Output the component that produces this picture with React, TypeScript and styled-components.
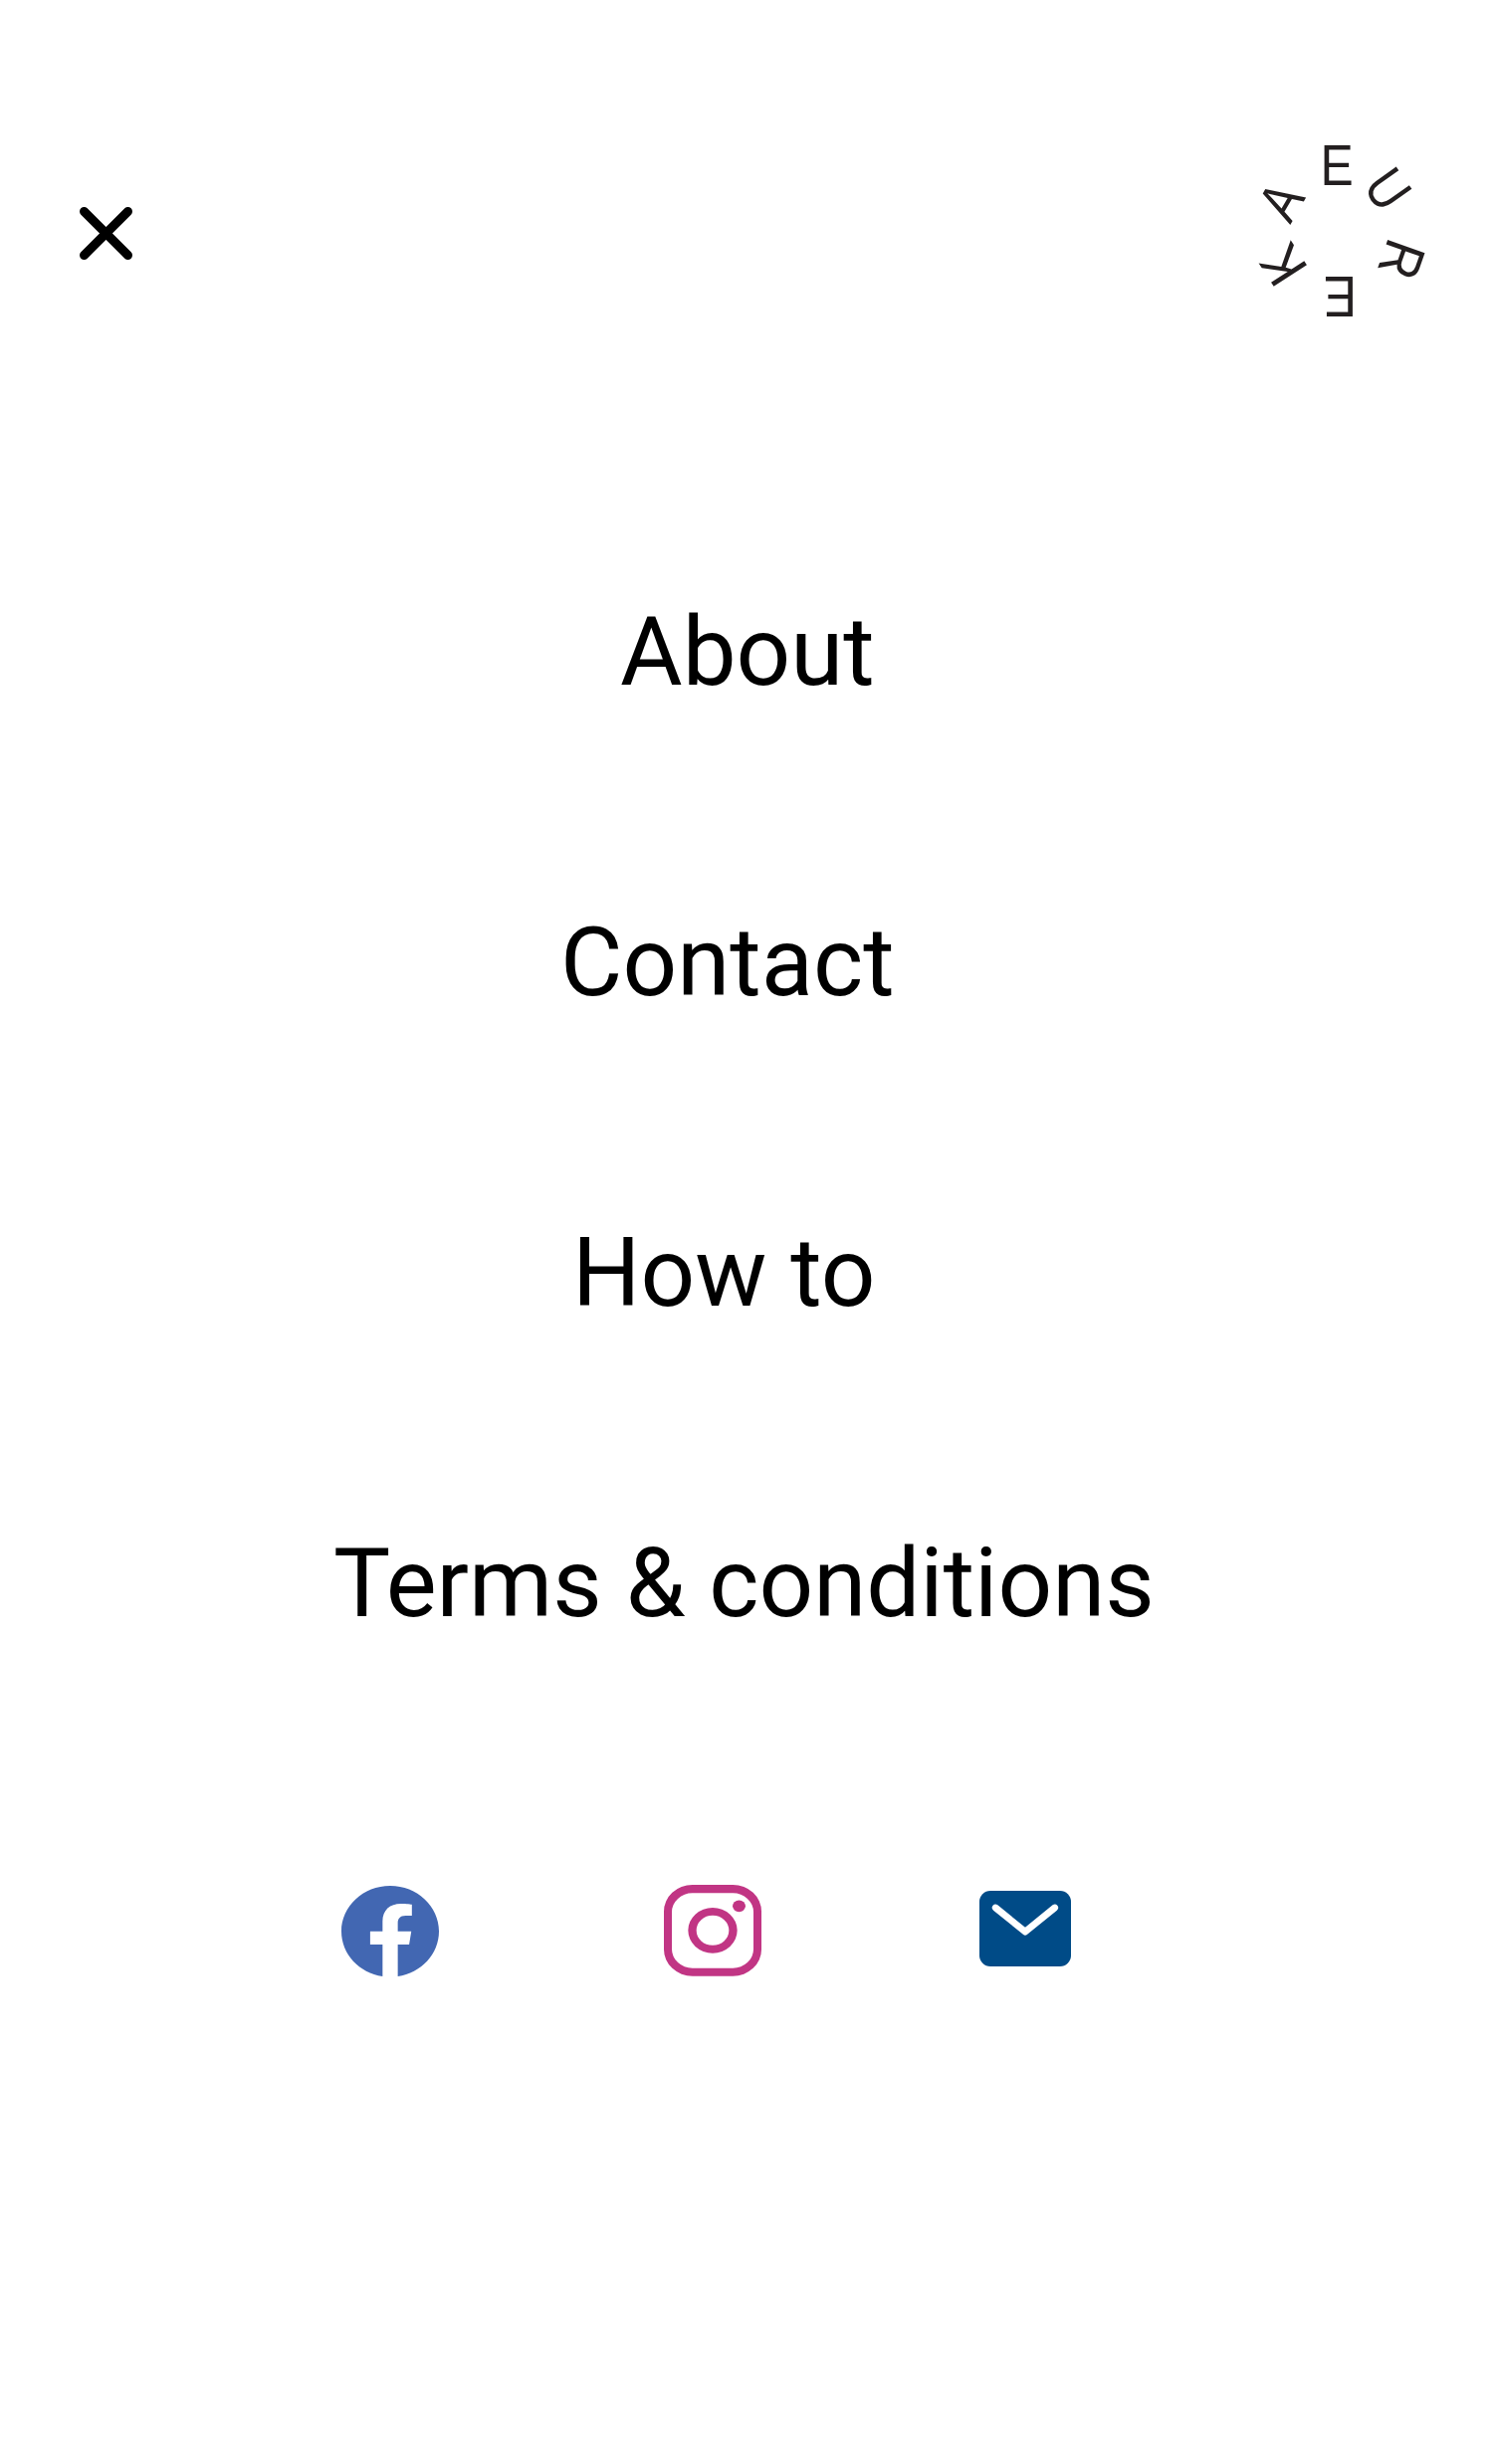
import React from 'react';
import styled, { createGlobalStyle } from 'styled-components';

const GlobalStyle = createGlobalStyle`
  body { margin: 0; background: #fff; }
`;

const Page = styled.div`
  box-sizing: border-box;
  display: flex;
  flex-direction: column;
  width: 1504px;
  height: 2476px;
  background: #fff;
  color: #000;
  font-family: Roboto, sans-serif;
  overflow: hidden;
`;

const Header = styled.header`
  box-sizing: border-box;
  display: flex;
  justify-content: space-between;
  align-items: flex-start;
  height: 499px;
  padding: 124px 50px 0 60px;
`;

const CloseButton = styled.button`
  display: block;
  width: 90px;
  height: 90px;
  margin: 66px 0 0;
  padding: 0;
  border: 0;
  background: none;
  cursor: pointer;
`;

const Icon = styled.svg<{ $w: number; $h: number }>`
  display: block;
  width: ${({ $w }) => $w}px;
  height: ${({ $h }) => $h}px;
`;

const LogoLetter = styled.text`
  font-family: 'Liberation Sans', Arial, sans-serif;
  font-size: 57.6px;
  fill: #231f20;
  text-anchor: middle;
`;

const Menu = styled.nav`
  display: flex;
  flex-direction: column;
  align-items: flex-start;
`;

const MenuLink = styled.a<{ $indent: number }>`
  margin-left: ${({ $indent }) => $indent}px;
  font-size: 96px;
  line-height: 312px;
  white-space: nowrap;
  color: inherit;
  text-decoration: none;
`;

const Social = styled.footer`
  display: flex;
  align-items: center;
  height: 92px;
  margin: 147px 0 0 343px;
`;

const SocialLink = styled.a<{ $gap?: number; $lift?: number }>`
  display: block;
  margin-left: ${({ $gap = 0 }) => $gap}px;
  margin-bottom: ${({ $lift = 0 }) => $lift}px;
`;

const letters = [
  { char: 'E', x: 99, y: 62.3, angle: 0, stretch: 0.865 },
  { char: 'U', x: 134.2, y: 77.6, angle: 54.7, stretch: 0.83 },
  { char: 'R', x: 145.4, y: 130.2, angle: 109.5, stretch: 0.87 },
  { char: 'E', x: 102.3, y: 154.3, angle: 180, stretch: 0.865 },
  { char: 'K', x: 61.8, y: 131.2, angle: 237, stretch: 0.9 },
  { char: 'A', x: 60.2, y: 88.3, angle: 300, stretch: 0.83 },
];

const links = [
  { label: 'About', indent: 623 },
  { label: 'Contact', indent: 563 },
  { label: 'How to', indent: 575 },
  { label: 'Terms & conditions', indent: 335 },
];

export default function App() {
  return (
    <>
      <GlobalStyle />
      <Page>
        <Header>
          <CloseButton aria-label="Close">
            <Icon $w={90} $h={90} viewBox="0 0 90 90">
              <path d="M24.5 22.5l44 44M68.5 22.5l-44 44" stroke="#000" strokeWidth="9" strokeLinecap="round" />
            </Icon>
          </CloseButton>
          <Icon $w={210} $h={210} viewBox="0 0 210 210">
            {letters.map((l, i) => (
              <LogoLetter key={i} transform={`translate(${l.x} ${l.y}) rotate(${l.angle}) scale(${l.stretch} 1)`}>
                {l.char}
              </LogoLetter>
            ))}
          </Icon>
        </Header>
        <Menu>
          {links.map((l) => (
            <MenuLink key={l.label} $indent={l.indent}>{l.label}</MenuLink>
          ))}
        </Menu>
        <Social>
          <SocialLink aria-label="Facebook">
            <Icon $w={98} $h={91} viewBox="0 0.073 24 23.854" preserveAspectRatio="none">
              <path fill="#4267b2" d="M24 12.073c0-6.627-5.373-12-12-12s-12 5.373-12 12c0 5.99 4.388 10.954 10.125 11.854v-8.385H7.078v-3.47h3.047V9.43c0-3.007 1.792-4.669 4.533-4.669 1.312 0 2.686.235 2.686.235v2.953H15.83c-1.491 0-1.956.925-1.956 1.874v2.25h3.328l-.532 3.47h-2.796v8.385C19.612 23.027 24 18.062 24 12.073z" />
            </Icon>
          </SocialLink>
          <SocialLink aria-label="Instagram" $gap={226}>
            <Icon $w={98} $h={92} viewBox="51 72 294 276">
              <path
                fill="#c13584"
                fillRule="evenodd"
                d="M137 72H259A86 80 0 0 1 345 152V267A86 80 0 0 1 259 347H137A86 80 0 0 1 51 267V152A86 80 0 0 1 137 72ZM137 97A62 57 0 0 0 75 154V266A62 57 0 0 0 137 323H259A62 57 0 0 0 321 266V154A62 57 0 0 0 259 97Z"
              />
              <path
                fill="#c13584"
                fillRule="evenodd"
                d="M124 209.500A74 68.500 0 0 1 272 209.500A74 68.500 0 0 1 124 209.500ZM149 209.500A49 45 0 0 0 247 209.500A49 45 0 0 0 149 209.500Z"
              />
              <ellipse cx="277.500" cy="136" rx="19.500" ry="17.500" fill="#c13584" />
            </Icon>
          </SocialLink>
          <SocialLink aria-label="Email" $gap={219} $lift={4}>
            <Icon $w={92} $h={76} viewBox="0 0 92 76">
              <rect width="92" height="76" rx="11" fill="#004b87" />
              <path d="M16.200 17L46 41.200L75.700 17" fill="none" stroke="#fff" strokeWidth="6.800" strokeLinecap="round" strokeLinejoin="round" />
            </Icon>
          </SocialLink>
        </Social>
      </Page>
    </>
  );
}
